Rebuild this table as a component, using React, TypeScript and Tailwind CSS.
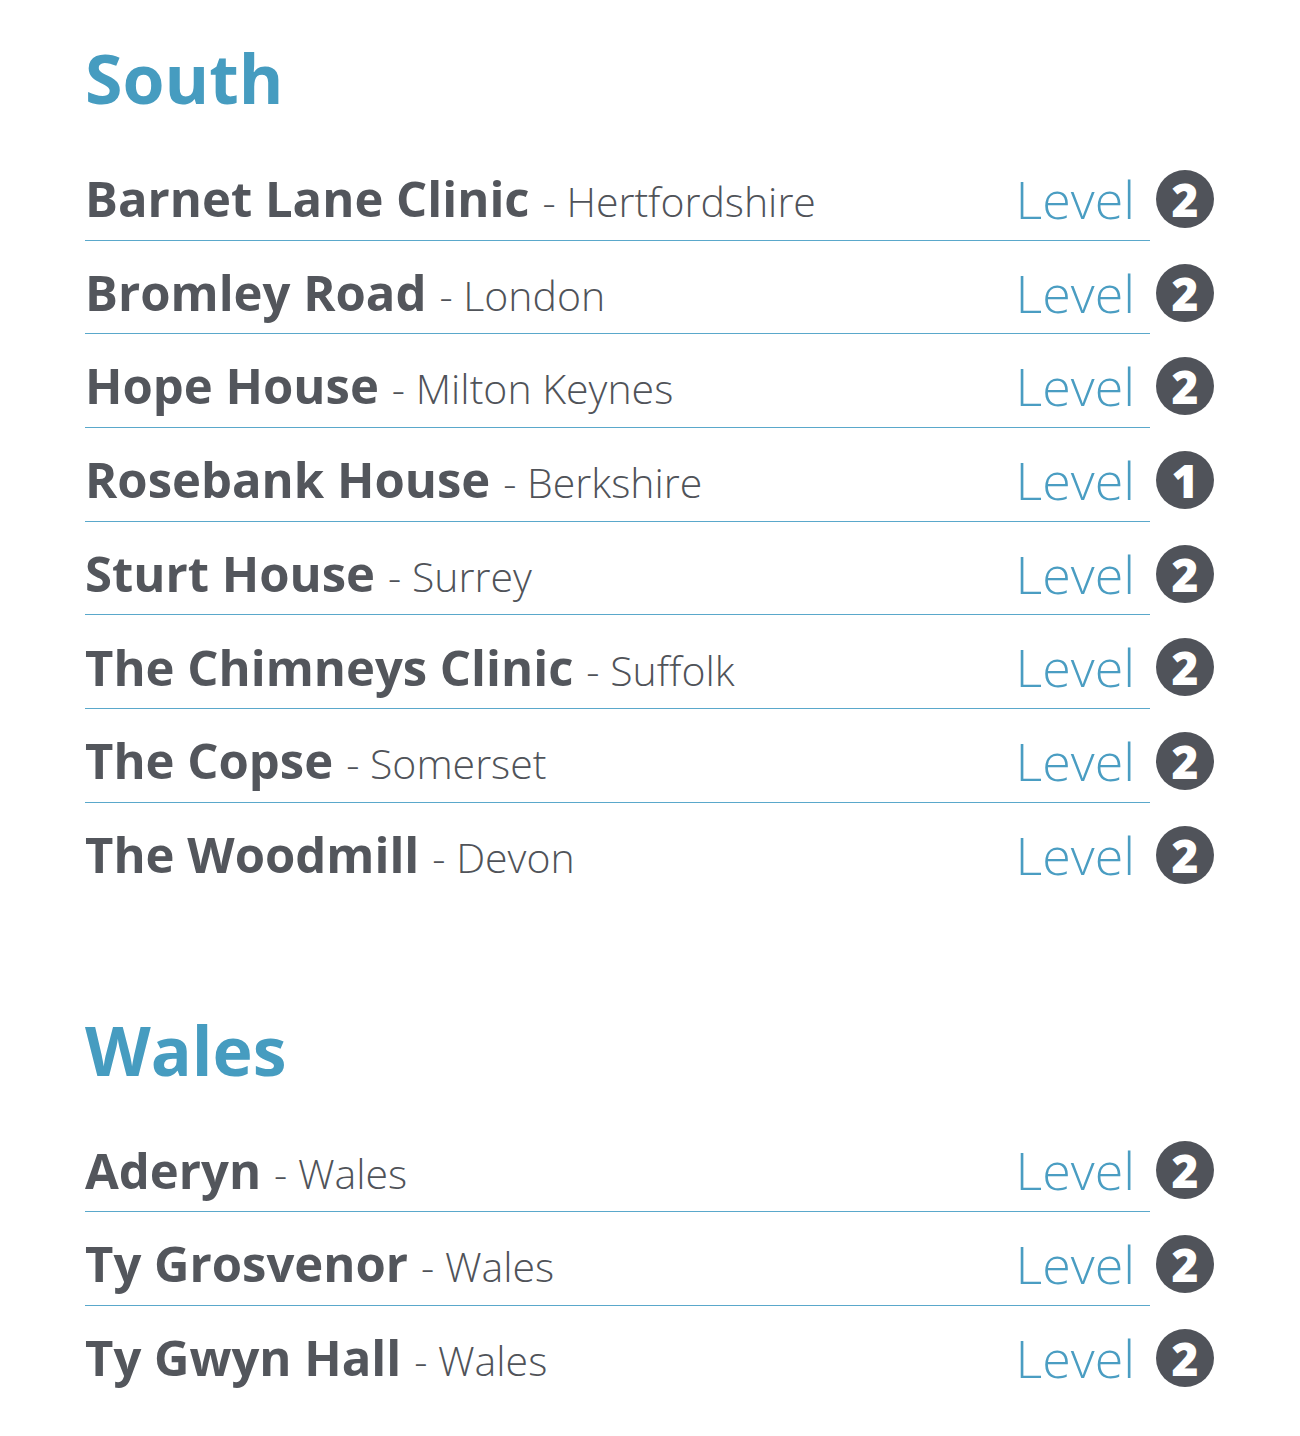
import React from "react";

type Clinic = { name: string; place: string; level: number };

const south: Clinic[] = [
  { name: "Barnet Lane Clinic", place: "Hertfordshire", level: 2 },
  { name: "Bromley Road", place: "London", level: 2 },
  { name: "Hope House", place: "Milton Keynes", level: 2 },
  { name: "Rosebank House", place: "Berkshire", level: 1 },
  { name: "Sturt House", place: "Surrey", level: 2 },
  { name: "The Chimneys Clinic", place: "Suffolk", level: 2 },
  { name: "The Copse", place: "Somerset", level: 2 },
  { name: "The Woodmill", place: "Devon", level: 2 },
];

const wales: Clinic[] = [
  { name: "Aderyn", place: "Wales", level: 2 },
  { name: "Ty Grosvenor", place: "Wales", level: 2 },
  { name: "Ty Gwyn Hall", place: "Wales", level: 2 },
];

function Row({ clinic, last }: { clinic: Clinic; last: boolean }) {
  return (
    <div className="flex h-[93.7px]">
      <div
        className={`flex flex-1 items-center justify-between pt-[11px] ${
          last ? "" : "border-b border-[#5aa8cb]"
        }`}
      >
        <div className="flex items-baseline whitespace-nowrap">
          <span className="text-[49px] font-bold text-[#53565c]">{clinic.name}</span>
          <span className="ml-[13px] text-[41px] font-light text-[#505359]">
            - {clinic.place}
          </span>
        </div>
        <span className="mr-[15px] text-[52px] font-light text-[#4a9dc2]">Level</span>
      </div>
      <div className="flex w-[64px] items-center justify-end pt-[11px] pb-[1px]">
        <div className="flex h-[58px] w-[58px] items-center justify-center rounded-full bg-[#50535a] text-[46px] font-extrabold leading-none text-white">
          {clinic.level}
        </div>
      </div>
    </div>
  );
}

function Region({ title, clinics }: { title: string; clinics: Clinic[] }) {
  return (
    <section>
      <h2 className="text-[68px] font-bold leading-none text-[#469cc0]">{title}</h2>
      <div className="mt-[35px]">
        {clinics.map((c, i) => (
          <Row key={c.name} clinic={c} last={i === clinics.length - 1} />
        ))}
      </div>
    </section>
  );
}

export default function App() {
  return (
    <div
      className="min-h-[1436px] bg-white pl-[85px] pt-[44px]"
      style={{ fontFamily: '"Open Sans", "Noto Sans", sans-serif' }}
    >
      <div className="flex w-[1129px] flex-col gap-[119px]">
        <Region title="South" clinics={south} />
        <Region title="Wales" clinics={wales} />
      </div>
    </div>
  );
}
